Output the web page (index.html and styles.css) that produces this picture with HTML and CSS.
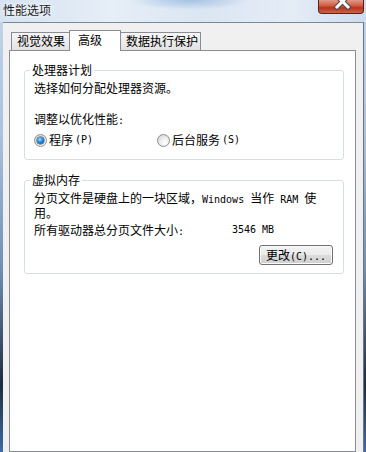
FILE: index.html
```html
<!DOCTYPE html>
<html lang="zh-CN">
<head>
    <meta charset="UTF-8">
    <meta name="viewport" content="width=device-width, initial-scale=1.0">
    <title>性能选项</title>
    <link rel="stylesheet" href="styles.css">
</head>
<body>
    <div class="window">
        <div class="titlebar">
            <span class="title">性能选项</span>
            <div class="close">
                <svg width="44" height="13" viewBox="0 0 44 13">
                    <path d="M18 -4 L29 7 M29 -4 L18 7" stroke="#4a4a4a" stroke-width="5" stroke-linecap="square"/>
                    <path d="M18 -4 L29 7 M29 -4 L18 7" stroke="#ffffff" stroke-width="3" stroke-linecap="square"/>
                </svg>
            </div>
        </div>
        <div class="client">
            <div class="tabs">
                <div class="tab tab-visual">视觉效果</div>
                <div class="tab tab-advanced active">高级</div>
                <div class="tab tab-dep">数据执行保护</div>
            </div>
            <div class="pane">
                <fieldset class="group group-cpu">
                    <legend>处理器计划</legend>
                    <p class="line">选择如何分配处理器资源。</p>
                    <p class="line adjust">调整以优化性能<span class="en">:</span></p>
                    <div class="radios">
                        <label class="option"><span class="radio on"></span>程序<span class="en">(P)</span></label>
                        <label class="option"><span class="radio"></span>后台服务<span class="en">(S)</span></label>
                    </div>
                </fieldset>
                <fieldset class="group group-mem">
                    <legend>虚拟内存</legend>
                    <p class="para">分页文件是硬盘上的一块区域，<span class="en">Windows </span>当作<span class="en"> RAM </span>使<br>用。</p>
                    <div class="total">
                        <span class="total-label">所有驱动器总分页文件大小<span class="en">:</span></span>
                        <span class="en">3546 MB</span>
                    </div>
                    <div class="actions">
                        <button class="btn">更改<span class="en">(C)...</span></button>
                    </div>
                </fieldset>
            </div>
        </div>
    </div>
</body>
</html>
```

FILE: styles.css
```css
body {
    margin: 0;
    font-family: "Noto Sans CJK SC", "Noto Sans", sans-serif;
    font-size: 12px;
    color: #000;
}
.window {
    width: 366px;
    height: 452px;
    display: flex;
    flex-direction: column;
    overflow: hidden;
    background: linear-gradient(#c3d6ea 0%, #a9c2de 30%, #6d8db4 60%, #1e2c3d 85%, #3d6ca5 100%);
}
.titlebar {
    flex: none;
    height: 22px;
    display: flex;
    justify-content: space-between;
    align-items: flex-start;
    background:
        radial-gradient(ellipse 60px 10px at 190px 0, rgba(150, 185, 225, 0.8), rgba(150, 185, 225, 0)),
        linear-gradient(90deg, #d4e2f1 0%, #e6eef7 30%, #dbe6f3 55%, #e4ecf6 80%, #cddcee 100%);
}
.title {
    padding-left: 3px;
    line-height: 20px;
    color: #1b1b1b;
    text-shadow: 0 0 4px #fff, 0 0 8px #fff;
}
.close {
    width: 46px;
    height: 14px;
    margin-right: 2px;
    box-sizing: border-box;
    border: 1px solid #5a2119;
    border-top: none;
    border-radius: 0 0 4px 4px;
    background: linear-gradient(#e09a88, #cf5a42 45%, #b8321b 60%, #c9674a);
}
.close svg {
    display: block;
}
.client {
    flex: 1;
    min-height: 0;
    margin: 0 2px 0 3px;
    padding: 7px 7px 0 6px;
    display: flex;
    flex-direction: column;
    background: #f0f0f0;
    border-top: 1px solid #7d8896;
    border-right: 1px solid #6b7584;
}
.tabs {
    flex: none;
    height: 20px;
    display: flex;
    align-items: flex-end;
    padding-left: 2px;
}
.tab {
    box-sizing: border-box;
    height: 18px;
    padding-left: 5px;
    line-height: 16px;
    white-space: nowrap;
    border: 1px solid #898c95;
    border-bottom: none;
    background: linear-gradient(#f6f6f6, #e2e2e2);
}
.tab + .tab {
    margin-left: -1px;
}
.tab-visual {
    width: 59px;
}
.tab-advanced {
    width: 52px;
}
.tab-dep {
    width: 81px;
}
.tab.active {
    height: 21px;
    margin-bottom: -1px;
    padding-left: 8px;
    padding-top: 1px;
    background: #fff;
    position: relative;
    z-index: 1;
}
.pane {
    flex: 1;
    padding: 13px 11px 0 14px;
    background: #fff;
    border: 1px solid #898c95;
}
.group {
    margin: 0;
    min-width: 0;
    padding: 0 9px;
    border: 1px solid #d5dfe5;
    border-radius: 3px;
}
.group legend {
    padding: 0 2px;
    margin-left: -4px;
    line-height: 12px;
}
.group-cpu {
    padding-top: 5px;
    padding-bottom: 12px;
}
.group-mem {
    margin-top: 14px;
    padding-top: 5px;
    padding-bottom: 8px;
}
.line {
    margin: 0;
    line-height: 14px;
}
.line.adjust {
    margin-top: 17px;
}
.radios {
    display: grid;
    grid-template-columns: 123px auto;
    height: 14px;
    margin-top: 5px;
}
.option {
    display: flex;
    align-items: center;
    gap: 2px;
    line-height: 14px;
}
.radio {
    box-sizing: border-box;
    width: 13px;
    height: 13px;
    display: flex;
    align-items: center;
    justify-content: center;
    border: 1px solid #8e8f8f;
    border-radius: 50%;
    background: radial-gradient(circle at 62% 68%, #ffffff 0, #ececec 45%, #cdcdcd 100%);
}
.radio.on::after {
    content: "";
    width: 7px;
    height: 7px;
    border-radius: 50%;
    background: radial-gradient(circle at 40% 35%, #a6e2fd 0, #2f92e2 40%, #0c4c92 85%);
    box-shadow: 0 0 0 0.5px #1c3e6a;
}
.en {
    font-family: "DejaVu Sans Mono", monospace;
    font-size: 10px;
}
.para {
    margin: 0;
    line-height: 13px;
}
.total {
    display: flex;
    margin-top: 4px;
    line-height: 14px;
}
.total-label {
    width: 198px;
}
.actions {
    display: flex;
    justify-content: flex-end;
    margin-top: 6px;
}
.btn {
    width: 74px;
    height: 20px;
    margin-right: 1px;
    padding: 0;
    font: inherit;
    line-height: 18px;
    color: #000;
    border: 1px solid #707070;
    border-radius: 3px;
    background: linear-gradient(#f2f2f2 0%, #ebebeb 49%, #dddddd 50%, #cfcfcf 100%);
    box-shadow: inset 0 0 0 1px #fbfbfb;
}
```
